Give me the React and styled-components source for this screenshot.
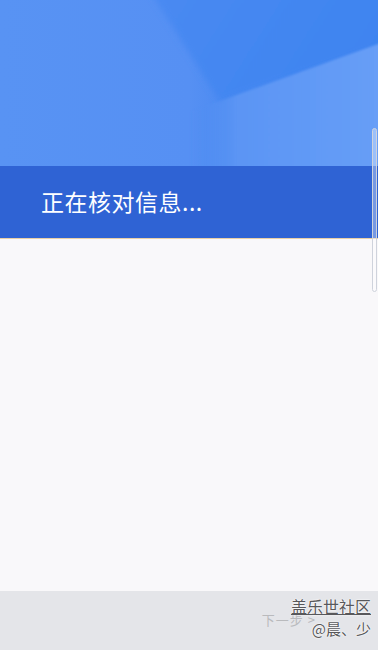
import React from 'react';
import styled, { createGlobalStyle } from 'styled-components';

const GlobalStyle = createGlobalStyle`
  html, body { margin: 0; padding: 0; }
  body {
    background: #f8f8fa;
    font-family: "Noto Sans CJK SC", "Noto Sans", sans-serif;
  }
`;

const Screen = styled.div`
  position: relative;
  width: 378px;
  height: 650px;
  display: flex;
  flex-direction: column;
  overflow: hidden;
  background: #f8f8fa;
`;

const Header = styled.div`
  height: 166px;
  flex-shrink: 0;
  background: #5591f2;
  svg { display: block; }
`;

const StatusBand = styled.div`
  height: 73px;
  flex-shrink: 0;
  display: flex;
  align-items: center;
  padding-left: 41px;
  padding-bottom: 2px;
  box-sizing: border-box;
  background: #2f63d4;
  border-bottom: 1px solid #e9cfa6;
`;

const StatusText = styled.span`
  color: #ffffff;
  font-size: 23px;
  font-weight: 400;
  letter-spacing: 0.5px;
`;

const Body = styled.div`
  flex: 1;
  background: #f9f8fa;
`;

const Footer = styled.div`
  height: 59px;
  flex-shrink: 0;
  display: flex;
  align-items: center;
  justify-content: flex-end;
  padding-right: 62px;
  background: #e4e5e9;
`;

const NextButton = styled.span`
  color: #b9babd;
  font-size: 13px;
  letter-spacing: 1px;
  margin-top: -2px;
`;

const EdgeHandle = styled.div`
  position: absolute;
  right: 1px;
  top: 128px;
  width: 3px;
  height: 162px;
  border: 1px solid #cfd3dc;
  border-radius: 3px;
  background: rgba(255, 255, 255, 0.35);
`;

const Watermark = styled.div`
  position: absolute;
  right: 7px;
  top: 597px;
  display: flex;
  flex-direction: column;
  align-items: flex-end;
  line-height: 1.15;
  color: #58585b;
  text-shadow: 0 0 2px #fff, 0 0 1px #fff, 0 0 1px #fff;
`;

const WatermarkTitle = styled.span`
  font-size: 16px;
  text-decoration: underline;
  text-decoration-thickness: 1px;
  text-underline-offset: 1px;
`;

const WatermarkUser = styled.span`
  font-size: 15px;
  margin-top: 5px;
`;

function HeaderArt() {
  return (
    <svg width="378" height="166" viewBox="0 0 378 166">
      <defs>
        <linearGradient id="left" x1="0" y1="0" x2="1" y2="0">
          <stop offset="0" stopColor="#5893f3" />
          <stop offset="0.5" stopColor="#5690f3" />
          <stop offset="0.62" stopColor="#4b8af1" />
          <stop offset="1" stopColor="#4a89f1" />
        </linearGradient>
        <linearGradient id="top" x1="0" y1="0" x2="1" y2="0.3">
          <stop offset="0" stopColor="#4a8af2" />
          <stop offset="1" stopColor="#3e84f0" />
        </linearGradient>
        <linearGradient id="wedge" x1="190" y1="0" x2="378" y2="0" gradientUnits="userSpaceOnUse">
          <stop offset="0" stopColor="#4d8cf2" stopOpacity="0" />
          <stop offset="0.25" stopColor="#5b95f4" />
          <stop offset="1" stopColor="#679ef7" />
        </linearGradient>
        <filter id="soft" x="-10%" y="-10%" width="120%" height="120%">
          <feGaussianBlur stdDeviation="3" />
        </filter>
        <filter id="crisp" x="-10%" y="-10%" width="120%" height="120%">
          <feGaussianBlur stdDeviation="1" />
        </filter>
      </defs>
      <rect width="378" height="166" fill="url(#left)" />
      <polygon points="143,-20 400,-20 400,40 220,102" fill="url(#top)" filter="url(#soft)" />
      <polygon points="190,112 400,36 400,190 170,190" fill="url(#wedge)" filter="url(#crisp)" />
    </svg>
  );
}

export default function App() {
  return (
    <>
      <GlobalStyle />
      <Screen>
        <Header>
          <HeaderArt />
        </Header>
        <StatusBand>
          <StatusText>正在核对信息...</StatusText>
        </StatusBand>
        <Body />
        <Footer>
          <NextButton>下一步 &gt;</NextButton>
        </Footer>
        <EdgeHandle />
        <Watermark>
          <WatermarkTitle>盖乐世社区</WatermarkTitle>
          <WatermarkUser>@晨、少</WatermarkUser>
        </Watermark>
      </Screen>
    </>
  );
}
